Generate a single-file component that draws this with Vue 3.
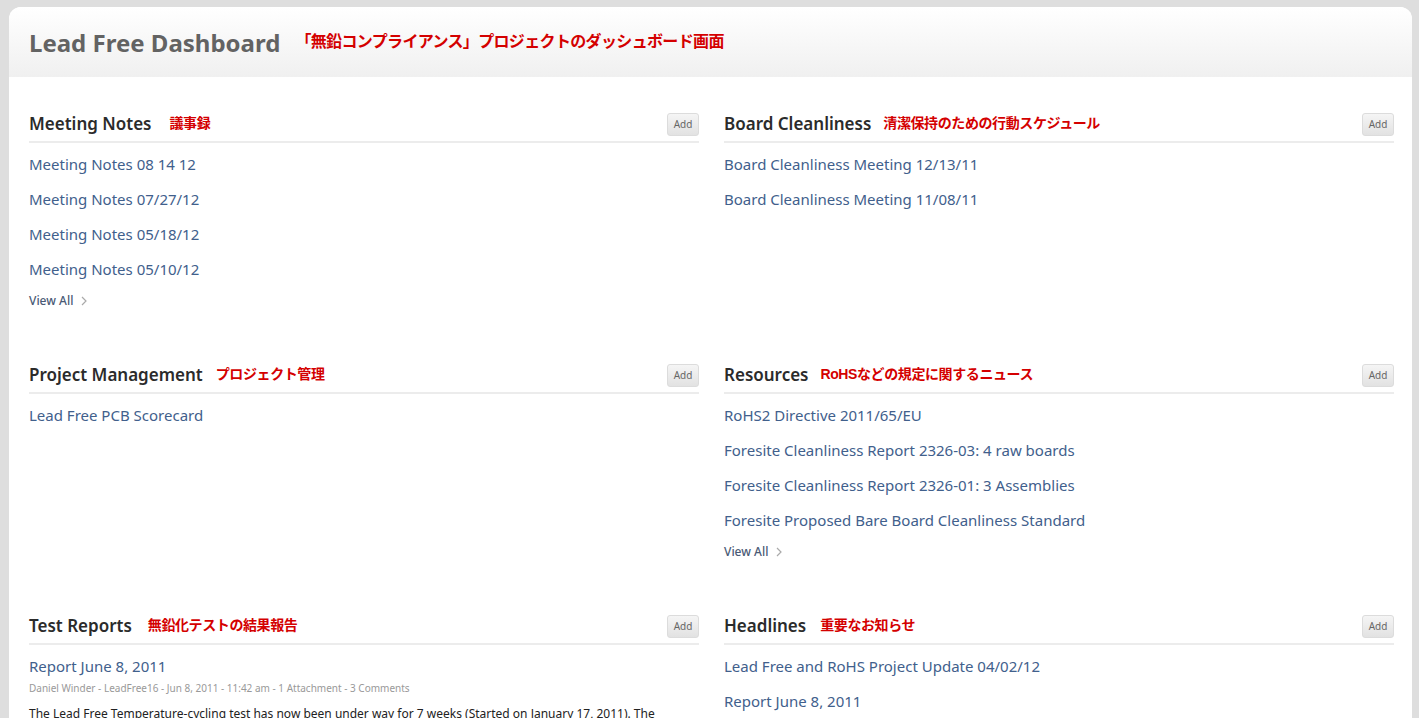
<template>
  <div class="page">
    <div class="card">
      <header class="top">
        <h1>Lead Free Dashboard</h1>
        <span class="note big">「無鉛コンプライアンス」プロジェクトのダッシュボード画面</span>
      </header>
      <div class="grid">
        <section v-for="s in sections" :key="s.title" class="block">
          <div class="head">
            <h2>{{ s.title }}</h2>
            <span class="note" :style="{ marginLeft: s.gap + 'px' }">{{ s.note }}</span>
            <button type="button">Add</button>
          </div>
          <ul>
            <li v-for="l in s.links" :key="l"><a href="#">{{ l }}</a></li>
          </ul>
          <template v-if="s.report">
            <p class="meta">Daniel Winder - LeadFree16 - Jun 8, 2011 - 11:42 am - 1 Attachment - 3 Comments</p>
            <p class="text">The Lead Free Temperature-cycling test has now been under way for 7 weeks (Started on January 17, 2011). The</p>
          </template>
          <a v-if="s.more" class="all" href="#">View All
            <svg width="6" height="10" viewBox="0 0 6 10"><path d="M1 1l4 4-4 4" fill="none" stroke="#aaa" stroke-width="1.2" /></svg>
          </a>
        </section>
      </div>
    </div>
  </div>
</template>

<script setup>
const sections = [
  { title: 'Meeting Notes', note: '議事録', gap: 18, more: true,
    links: ['Meeting Notes 08 14 12', 'Meeting Notes 07/27/12', 'Meeting Notes 05/18/12', 'Meeting Notes 05/10/12'] },
  { title: 'Board Cleanliness', note: '清潔保持のための行動スケジュール', gap: 12,
    links: ['Board Cleanliness Meeting 12/13/11', 'Board Cleanliness Meeting 11/08/11'] },
  { title: 'Project Management', note: 'プロジェクト管理', gap: 13,
    links: ['Lead Free PCB Scorecard'] },
  { title: 'Resources', note: 'RoHSなどの規定に関するニュース', gap: 12, more: true,
    links: ['RoHS2 Directive 2011/65/EU', 'Foresite Cleanliness Report 2326-03: 4 raw boards', 'Foresite Cleanliness Report 2326-01: 3 Assemblies', 'Foresite Proposed Bare Board Cleanliness Standard'] },
  { title: 'Test Reports', note: '無鉛化テストの結果報告', gap: 16, report: true,
    links: ['Report June 8, 2011'] },
  { title: 'Headlines', note: '重要なお知らせ', gap: 14,
    links: ['Lead Free and RoHS Project Update 04/02/12', 'Report June 8, 2011'] }
]
</script>

<style>
html, body { margin: 0; background: #dedede; overflow: hidden; }
</style>

<style scoped>
.page {
  height: 718px;
  overflow: hidden;
  padding: 7px 7px 0 9px;
  box-sizing: border-box;
  font-family: "Noto Sans", "Noto Sans CJK JP", sans-serif;
}

.card {
  background: #fff;
  border-radius: 12px 12px 0 0;
  height: 100%;
  overflow: hidden;
}

.top {
  height: 70px;
  padding-left: 20px;
  display: flex;
  align-items: center;
  background: linear-gradient(#fff, #f0f0f0);
  box-sizing: border-box;
}

h1 {
  margin: 0;
  font-size: 24px;
  font-weight: 700;
  color: #636363;
}

.note {
  font-family: "Liberation Sans", "Noto Sans CJK JP", sans-serif;
  font-weight: 700;
  font-size: 14px;
  color: #d40000;
  letter-spacing: -0.4px;
  position: relative;
  top: -1px;
}

.note.big {
  font-size: 16px;
  letter-spacing: -0.65px;
  margin-left: 15px;
  top: -2px;
}

.grid {
  display: grid;
  grid-template-columns: 670px 670px;
  column-gap: 25px;
  grid-auto-rows: 251px;
  padding: 28px 0 0 20px;
}

.head {
  display: flex;
  align-items: center;
  height: 36px;
  border-bottom: 2px solid #ececec;
}

h2 {
  margin: 0;
  font-size: 17px;
  font-weight: 600;
  color: #2b2b2b;
}

button {
  margin-left: auto;
  width: 32px;
  height: 23px;
  padding: 0;
  border: 1px solid #dcdcdc;
  border-radius: 3px;
  background: linear-gradient(#f5f5f5, #e2e2e2);
  font-family: inherit;
  font-size: 10px;
  color: #666;
  position: relative;
  top: 1px;
}

ul {
  list-style: none;
  margin: 0;
  padding: 11px 0 0;
}

li {
  height: 35px;
  line-height: 20px;
  font-size: 15px;
}

a {
  color: #41608c;
  text-decoration: none;
}

.all {
  display: flex;
  align-items: center;
  gap: 8px;
  font-size: 12px;
  font-weight: 500;
  color: #4a5a75;
  margin-top: -2px;
}

.meta {
  margin: -11px 0 0;
  font-size: 10px;
  color: #999;
  line-height: 16px;
}

.text {
  margin: 9px 0 0;
  font-size: 12px;
  line-height: 18px;
  color: #222;
}
</style>
